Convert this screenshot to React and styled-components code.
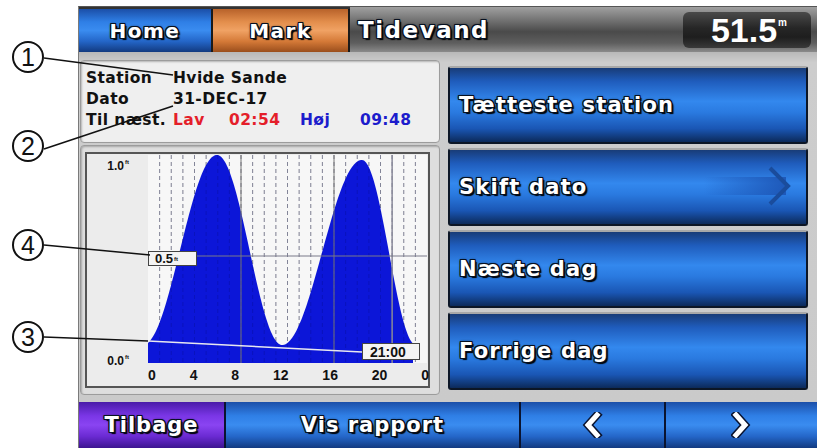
import React from "react";
import styled, { createGlobalStyle, css } from "styled-components";

const GlobalStyle = createGlobalStyle`
  html, body { margin: 0; padding: 0; background: #ffffff; }
  body { font-family: "DejaVu Sans", "Liberation Sans", sans-serif; }
  * { box-sizing: border-box; }
`;

const outline = css`
  text-shadow: 1px 1px 0 #061020, -1px -1px 0 #061020, 1px -1px 0 #061020,
    -1px 1px 0 #061020, 0 1px 0 #061020, 0 -1px 0 #061020, 1px 0 0 #061020,
    -1px 0 0 #061020, 2px 2px 1px #000, 0 0 3px #000;
`;

const Page = styled.div`
  position: relative;
  width: 820px;
  height: 448px;
  display: flex;
  overflow: hidden;
`;

const Gutter = styled.div`
  width: 78px;
  flex: none;
`;

const Device = styled.div`
  width: 739px;
  height: 442px;
  margin-top: 6px;
  display: flex;
  flex-direction: column;
  background: #c9c9c9;
  border-left: 1px solid #7a7a7a;
  border-top: 1px solid #555;
`;

const TopBar = styled.div`
  height: 45px;
  display: flex;
  flex: none;
  background: #333;
`;

const tabColors = {
  blue: css`
    background: linear-gradient(180deg, #1b4fa8 0%, #2f7fe6 30%, #3a8cf0 50%, #2466c8 75%, #123a80 100%);
  `,
  orange: css`
    background: linear-gradient(180deg, #b8622a 0%, #e38e4c 30%, #f0a264 50%, #d57a38 75%, #9a4e1c 100%);
  `,
  purple: css`
    background: linear-gradient(180deg, #4a1ca8 0%, #7a36e6 30%, #8a44f2 50%, #6a2ad2 75%, #3c1490 100%);
  `,
};

const TopTab = styled.div`
  width: ${(p) => p.$w}px;
  flex: none;
  display: flex;
  align-items: center;
  justify-content: center;
  color: #fff;
  font-weight: bold;
  font-size: 20px;
  letter-spacing: 1.5px;
  margin-top: 2px;
  border-right: 2px solid #1a1a1a;
  ${outline}
  ${(p) => tabColors[p.$color]}
`;

const TitleBar = styled.div`
  flex: 1;
  display: flex;
  align-items: center;
  padding: 0 6px 0 8px;
  background: linear-gradient(180deg, #a0a0a0 0%, #6a6a6a 35%, #4a4a4a 55%, #5e5e5e 80%, #8a8a8a 100%);
`;

const Title = styled.div`
  color: #fff;
  font-weight: bold;
  font-size: 23px;
  letter-spacing: 1.5px;
  ${outline}
`;

const DepthBox = styled.div`
  margin-left: auto;
  width: 128px;
  height: 36px;
  border-radius: 6px;
  background: linear-gradient(180deg, #4a4a4a 0%, #262626 45%, #1e1e1e 70%, #3a3a3a 100%);
  display: flex;
  align-items: center;
  justify-content: flex-end;
  padding-right: 24px;
  color: #fff;
  font-family: "Liberation Sans", Arial, sans-serif;
  font-weight: bold;
  font-size: 34px;
  line-height: 1;
`;

const Unit = styled.span`
  font-size: 10px;
  align-self: flex-start;
  margin-top: 6px;
  margin-left: 1px;
`;

const Content = styled.div`
  flex: 1;
  display: flex;
  gap: 8px;
  padding: 8px 9px 7px 1px;
  background: linear-gradient(180deg, #b8b8b8 0%, #cdcdcd 3%, #cacaca 100%);
`;

const LeftCol = styled.div`
  width: 360px;
  display: flex;
  flex-direction: column;
  gap: 2px;
`;

const InfoPanel = styled.div`
  height: 83px;
  background: #efefef;
  border: 1px solid #9c9c9c;
  border-radius: 4px;
  padding: 6px 0 0 5px;
  display: grid;
  grid-template-columns: 87px 56px 71px 60px auto;
  grid-auto-rows: 21px;
  align-items: center;
  font-size: 15.5px;
  font-weight: bold;
  letter-spacing: 0.4px;
  color: #111;
  box-shadow: inset 1px 1px 2px rgba(0, 0, 0, 0.25);
`;

const Cell = styled.span`
  grid-column: ${(p) => p.$span || "auto"};
  color: ${(p) => p.$c || "#111"};
  white-space: nowrap;
`;

const ChartPanel = styled.div`
  flex: 1;
  background: #dedede;
  border: 1px solid #9c9c9c;
  border-radius: 4px;
  padding: 6px 9px 6px 4px;
  display: flex;
  box-shadow: inset 1px 1px 2px rgba(0, 0, 0, 0.25);
`;

const Frame = styled.div`
  flex: 1;
  border: 2px solid #555;
  background: #ececec;
  display: grid;
  grid-template-columns: 61px 279px;
  grid-template-rows: 208px 23px;
  padding-top: 1px;
`;

const YAxis = styled.div`
  display: flex;
  flex-direction: column;
  justify-content: space-between;
  align-items: flex-end;
  padding: 4px 19px 0 0;
  margin-bottom: -5px;
  font-family: "Liberation Sans", Arial, sans-serif;
  font-weight: bold;
  font-size: 12px;
  color: #111;
`;

const Sup = styled.sup`
  font-size: 6px;
  vertical-align: top;
  margin-left: 1px;
`;

const Plot = styled.div`
  position: relative;
  width: 279px;
  height: 208px;
  background: #f7f7f7;
`;

const ChartSvg = styled.svg`
  display: block;
`;

const ValueTag = styled.div`
  position: absolute;
  left: ${(p) => p.$x}px;
  top: ${(p) => p.$y}px;
  width: ${(p) => p.$w}px;
  height: ${(p) => p.$h}px;
  padding-left: ${(p) => p.$pad}px;
  background: #f4f4f4;
  border: 1px solid #444;
  font-family: "Liberation Sans", Arial, sans-serif;
  font-weight: bold;
  font-size: ${(p) => p.$fs}px;
  color: #111;
  display: flex;
  align-items: center;
  line-height: 1;
`;

const XAxis = styled.div`
  grid-column: 2;
  display: flex;
  justify-content: space-between;
  align-items: center;
  margin-right: -2px;
  font-family: "Liberation Sans", Arial, sans-serif;
  font-weight: bold;
  font-size: 14px;
  color: #111;
`;

const RightCol = styled.div`
  flex: 1;
  display: flex;
  flex-direction: column;
  gap: 4px;
  padding-top: 6px;
`;

const MenuButton = styled.div`
  height: 78px;
  display: flex;
  align-items: center;
  padding: 0 8px 0 9px;
  color: #fff;
  font-weight: bold;
  font-size: 21px;
  letter-spacing: 1.2px;
  border: 2px solid #0c1626;
  border-top: 2px solid #a8a8a8;
  border-radius: 3px;
  background: linear-gradient(180deg, #183c78 0%, #1f5cbc 18%, #3388ee 45%, #2a7ae0 60%, #1a56b4 82%, #0c2a5a 100%);
  ${outline}
`;

const ButtonArrow = styled.svg`
  margin-left: auto;
  margin-top: -2px;
  flex: none;
`;

const BottomBar = styled.div`
  height: 46px;
  flex: none;
  display: flex;
  background: #0a1430;
`;

const BottomButton = styled.div`
  ${(p) => (p.$w ? `width: ${p.$w}px; flex: none;` : "flex: 1;")}
  display: flex;
  align-items: center;
  justify-content: center;
  color: #fff;
  font-weight: bold;
  font-size: 21px;
  letter-spacing: 1px;
  border-right: ${(p) => (p.$last ? "0" : "2px solid #0a1430")};
  ${outline}
  ${(p) => tabColors[p.$color]}
`;

const Overlay = styled.svg`
  position: absolute;
  left: 0;
  top: 0;
  pointer-events: none;
`;

const CalloutNum = styled.text`
  font-family: "Liberation Sans", Arial, sans-serif;
  font-size: 25px;
  fill: #111;
`;

/* ---------- chart data ---------- */
const W = 279;
const H = 208;
const HOUR = W / 24;
const extrema = [
  [-5, 190],
  [69, 0],
  [134, 190],
  [214, 5],
  [268, 190],
];
function curveY(x) {
  for (let i = 0; i < extrema.length - 1; i++) {
    const [x0, y0] = extrema[i];
    const [x1, y1] = extrema[i + 1];
    if (x >= x0 && x <= x1) {
      const t = (x - x0) / (x1 - x0);
      return y0 + ((y1 - y0) * (1 - Math.cos(Math.PI * t))) / 2;
    }
  }
  return 190;
}
const END = 265;
let d = `M0,${H}`;
for (let x = 0; x <= END; x += 1) d += ` L${x},${curveY(x).toFixed(1)}`;
d += ` L${END},${H} Z`;

const hours = Array.from({ length: 23 }, (_, i) => i + 1);

function Chevron({ dir }) {
  const pts = dir === "left" ? "15,3 6,13 15,23" : "5,3 14,13 5,23";
  return (
    <svg width="21" height="26" viewBox="0 0 21 26">
      <polyline points={pts} fill="none" stroke="#0a1430" strokeWidth="8" strokeLinejoin="miter" strokeLinecap="square" />
      <polyline points={pts} fill="none" stroke="#ffffff" strokeWidth="5" strokeLinejoin="miter" strokeLinecap="square" />
    </svg>
  );
}

export default function App() {
  return (
    <>
      <GlobalStyle />
      <Page>
        <Gutter />
        <Device>
          <TopBar>
            <TopTab $w={134} $color="blue">Home</TopTab>
            <TopTab $w={137} $color="orange">Mark</TopTab>
            <TitleBar>
              <Title>Tidevand</Title>
              <DepthBox>
                51.5<Unit>m</Unit>
              </DepthBox>
            </TitleBar>
          </TopBar>
          <Content>
            <LeftCol>
              <InfoPanel>
                <Cell>Station</Cell>
                <Cell $span="2 / span 4">Hvide Sande</Cell>
                <Cell>Dato</Cell>
                <Cell $span="2 / span 4">31-DEC-17</Cell>
                <Cell>Til næst.</Cell>
                <Cell $c="#e41e2a">Lav</Cell>
                <Cell $c="#e41e2a">02:54</Cell>
                <Cell $c="#1c1ccc">Høj</Cell>
                <Cell $c="#1c1ccc">09:48</Cell>
              </InfoPanel>
              <ChartPanel>
                <Frame>
                  <YAxis>
                    <span>
                      1.0<Sup>ft</Sup>
                    </span>
                    <span>
                      0.0<Sup>ft</Sup>
                    </span>
                  </YAxis>
                  <Plot>
                    <ChartSvg width={W} height={H} viewBox={`0 0 ${W} ${H}`}>
                      {hours.map((h) => (
                        <line key={"g" + h} x1={h * HOUR} x2={h * HOUR} y1="0" y2={H} stroke="#a8a8a8" strokeWidth="1" strokeDasharray="4 3" />
                      ))}
                      <path d={d} fill="#0c16d8" />
                      {hours.map((h) => (
                        <line key={"o" + h} x1={h * HOUR} x2={h * HOUR} y1="0" y2={H} stroke="#000860" strokeOpacity="0.22" strokeWidth="1" strokeDasharray="4 3" />
                      ))}
                      <line x1={8 * HOUR} x2={8 * HOUR} y1="0" y2={H} stroke="#777" strokeWidth="1" />
                      <line x1={16 * HOUR} x2={16 * HOUR} y1="0" y2={H} stroke="#777" strokeWidth="1" />
                      <line x1={21 * HOUR} x2={21 * HOUR} y1="0" y2={H} stroke="#8a8a9a" strokeWidth="1.5" />
                      <line x1="0" x2={W} y1="101" y2="101" stroke="#7a7a8a" strokeWidth="1.2" />
                    </ChartSvg>
                    <ValueTag $x={0} $y={96} $w={49} $h={15} $pad={6} $fs={13}>
                      0.5<Sup>ft</Sup>
                    </ValueTag>
                    <ValueTag $x={214} $y={188} $w={58} $h={17} $pad={7} $fs={14}>
                      21:00
                    </ValueTag>
                  </Plot>
                  <XAxis>
                    <span>0</span>
                    <span>4</span>
                    <span>8</span>
                    <span>12</span>
                    <span>16</span>
                    <span>20</span>
                    <span>0</span>
                  </XAxis>
                </Frame>
              </ChartPanel>
            </LeftCol>
            <RightCol>
              <MenuButton>Tætteste station</MenuButton>
              <MenuButton>
                Skift dato
                <ButtonArrow width="100" height="42" viewBox="0 0 100 42">
                  <defs>
                    <linearGradient id="band" x1="0" x2="1" y1="0" y2="0">
                      <stop offset="0" stopColor="#1c54b4" stopOpacity="0" />
                      <stop offset="1" stopColor="#1c54b4" stopOpacity="0.9" />
                    </linearGradient>
                  </defs>
                  <rect x="6" y="12" width="82" height="18" fill="url(#band)" />
                  <polyline points="72,3 90,21 72,39" fill="none" stroke="#1a4c9c" strokeWidth="4" />
                </ButtonArrow>
              </MenuButton>
              <MenuButton>Næste dag</MenuButton>
              <MenuButton>Forrige dag</MenuButton>
            </RightCol>
          </Content>
          <BottomBar>
            <BottomButton $w={147} $color="purple">Tilbage</BottomButton>
            <BottomButton $w={295} $color="blue">Vis rapport</BottomButton>
            <BottomButton $w={145} $color="blue">
              <Chevron dir="left" />
            </BottomButton>
            <BottomButton $color="blue" $last>
              <Chevron dir="right" />
            </BottomButton>
          </BottomBar>
        </Device>
        <Overlay width="820" height="448" viewBox="0 0 820 448">
          {[
            [1, 57],
            [2, 146],
            [4, 245],
            [3, 337],
          ].map(([n, cy]) => (
            <g key={n}>
              <circle cx="28" cy={cy} r="15" fill="#fff" stroke="#111" strokeWidth="2" />
              <CalloutNum x="28" y={cy + 9} textAnchor="middle">
                {n}
              </CalloutNum>
            </g>
          ))}
          <line x1="44" y1="58" x2="173" y2="75" stroke="#111" strokeWidth="1.5" />
          <line x1="44" y1="149" x2="173" y2="106" stroke="#111" strokeWidth="1.5" />
          <line x1="44" y1="245" x2="150" y2="255" stroke="#111" strokeWidth="1.5" />
          <line x1="44" y1="337" x2="148" y2="341" stroke="#111" strokeWidth="1.5" />
          <line x1="148" y1="341" x2="362" y2="352" stroke="#e8e8f0" strokeWidth="1.5" />
        </Overlay>
      </Page>
    </>
  );
}
